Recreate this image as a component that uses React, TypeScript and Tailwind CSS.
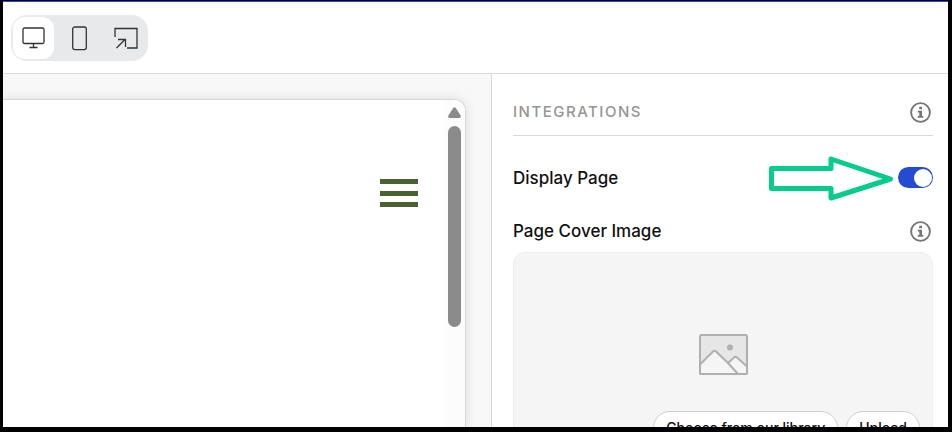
import { useState } from 'react';

function DesktopIcon() {
  return (
    <svg width="23" height="22" viewBox="0 0 23 22" fill="none" stroke="#333" aria-hidden="true">
      <rect x="1" y="1" width="21" height="15.5" rx="1.5" strokeWidth="1.3" />
      <path d="M11.5 16.5v4M7.5 20.5h8" strokeWidth="1.3" />
    </svg>
  );
}

function PhoneIcon() {
  return (
    <svg width="15" height="25" viewBox="0 0 15 25" fill="none" stroke="#333" aria-hidden="true">
      <rect x="0.7" y="1" width="13.6" height="22.6" rx="2" strokeWidth="1.3" />
    </svg>
  );
}

function ResizeIcon() {
  return (
    <svg width="24" height="22" viewBox="0 0 24 22" fill="none" stroke="#333" strokeWidth="1.3" aria-hidden="true">
      <path d="M1 10V1.5h22v19.5H13" />
      <path d="M2.5 21l8.5-8.5M4 12.5h7.5V20" />
    </svg>
  );
}

function InfoButton({ label }: { label: string }) {
  return (
    <button type="button" aria-label={label} className="shrink-0">
      <svg width="21" height="21" viewBox="0 0 21 21" fill="none" aria-hidden="true">
        <circle cx="10.5" cy="10.5" r="9.4" stroke="#757575" strokeWidth="1.9" />
        <path d="M9.2 4.8H12v2.5H9.2zM7.8 8.7H12V14h1.3v1.8H7.8V14h1.5v-3.5H7.8z" fill="#757575" />
      </svg>
    </button>
  );
}

const devices = [
  { id: 'desktop', label: 'Desktop', Icon: DesktopIcon },
  { id: 'mobile', label: 'Mobile', Icon: PhoneIcon },
  { id: 'resize', label: 'Full size', Icon: ResizeIcon },
];

export default function App() {
  const [device, setDevice] = useState('desktop');
  const [display, setDisplay] = useState(true);

  return (
    <div className="h-screen overflow-hidden bg-white border-black border-t border-l-3 border-r-4 border-b-5 flex flex-col text-[#111] font-['Inter',sans-serif]">
      <header className="shrink-0 border-t border-t-[#244bd2] border-b border-b-[#dcdcdc] pt-[13px] pb-3 px-2">
        <div className="inline-flex gap-[5px] p-0.5 h-[46px] rounded-2xl bg-[#e8e9eb] align-top">
          {devices.map(({ id, label, Icon }) => (
            <button key={id} type="button" aria-label={label} onClick={() => setDevice(id)}
              className={`w-[41px] flex items-center justify-center rounded-xl ${device === id ? 'bg-white' : ''}`}>
              <Icon />
            </button>
          ))}
        </div>
      </header>

      <div className="flex-1 min-h-0 flex">
        <main className="flex-1 min-w-0 bg-[#f8f8f8] pt-[25px] pr-[25px] flex overflow-hidden">
          <div className="flex-1 flex bg-white border-t border-r border-[#d8d8d8] rounded-tr-xl shadow-[0_0_12px_rgba(0,0,0,0.12)] overflow-hidden">
            <div className="flex-1 flex justify-end items-start pt-[79px] pr-[26px]">
              <button type="button" aria-label="Menu" className="w-[38px] h-7 flex flex-col justify-between">
                <span className="h-[5px] w-full bg-[#4a6130]" />
                <span className="h-[5px] w-full bg-[#4a6130]" />
                <span className="h-[5px] w-full bg-[#4a6130]" />
              </button>
            </div>
            <div className="w-[21px] bg-[#fcfcfc] flex flex-col items-center pt-[7px]">
              <svg width="13" height="11" viewBox="0 0 13 11" fill="#8b8b8b" aria-hidden="true">
                <path d="M5.2 1Q6.5-.6 7.8 1l4.8 7.6q1 2.4-1.2 2.4H1.6Q-.6 11 .4 8.6z" />
              </svg>
              <div className="mt-2 w-[13px] h-[201px] rounded-full bg-[#8b8b8b]" />
            </div>
          </div>
        </main>

        <aside className="w-[457px] shrink-0 border-l border-[#d8d8d8] pl-[21px] pr-[15px] overflow-hidden">
          <div className="h-[62px] pt-[15px] pr-0.5 flex items-center justify-between border-b border-[#d8d8d8]">
            <h2 className="text-[15px] font-medium tracking-widest text-[#959595]">INTEGRATIONS</h2>
            <InfoButton label="About integrations" />
          </div>

          <div className="relative h-[83px] flex items-center justify-between">
            <label htmlFor="display-page" className="pt-0.5 text-[17px] font-medium">Display Page</label>
            <svg className="absolute right-[39px] top-5" width="126" height="46" viewBox="0 0 126 46" fill="none" aria-hidden="true">
              <path d="M3.5 12.5H63V3l59.500 20L63 42V32.500H3.5z" stroke="#04cc8c" strokeWidth="5" strokeLinejoin="round" />
            </svg>
            <input id="display-page" type="checkbox" role="switch" checked={display} onChange={e => setDisplay(e.target.checked)}
              className="appearance-none w-[35px] h-[21px] p-px rounded-full bg-gray-400 checked:bg-[#244bd2] flex items-center checked:justify-end before:content-[''] before:size-[18px] before:rounded-full before:bg-white" />
          </div>

          <div className="h-[33px] pt-0.5 pr-0.5 flex items-start justify-between">
            <h3 className="text-[17px] leading-5 font-medium">Page Cover Image</h3>
            <InfoButton label="About the page cover image" />
          </div>

          <div className="h-[210px] rounded-xl border border-[#eeeeee] bg-[#f5f5f5] flex flex-col items-center pt-[81px]">
            <svg width="49" height="41" viewBox="0 0 49 41" fill="none" stroke="#b0b0b0" strokeWidth="2" strokeLinejoin="round" aria-hidden="true">
              <rect x="1" y="1" width="47" height="39" rx="1.5" fill="#e6e6e6" />
              <path d="M1 30.5L14 17.5q1.5-1.5 3 0L29 29l6-5.5q1.5-1.5 3 0l10 9v6q0 1.5-1.5 1.5h-44Q1 40 1 38.5z" fill="#f5f5f5" />
              <path d="M29 29l10 11" />
              <circle cx="31" cy="13.5" r="3" fill="#b0b0b0" stroke="none" />
            </svg>
            <div className="self-end flex gap-2 mt-9 mr-3">
              <button type="button" className="h-[34px] px-3 rounded-full border border-[#d0d0d0] bg-white text-sm font-medium whitespace-nowrap">Choose from our library</button>
              <button type="button" className="h-[34px] px-3 rounded-full border border-[#d0d0d0] bg-white text-sm font-medium">Upload</button>
            </div>
          </div>
        </aside>
      </div>
    </div>
  );
}
